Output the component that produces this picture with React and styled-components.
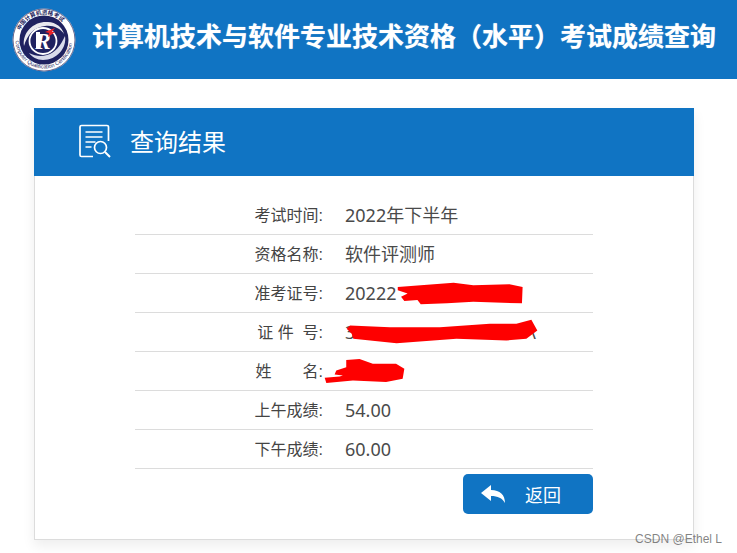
import React from "react";
import styled, { createGlobalStyle } from "styled-components";

const BLUE = "#1074c3";

const GlobalStyle = createGlobalStyle`
  html, body {
    margin: 0;
    padding: 0;
    background: #fff;
    font-family: "Liberation Sans", "Noto Sans CJK SC", sans-serif;
  }
`;

const Page = styled.div`
  position: relative;
  width: 737px;
  height: 553px;
  overflow: hidden;
`;

const TopBar = styled.header`
  height: 79px;
  background: ${BLUE};
  display: flex;
  align-items: center;
  padding-left: 12px;
  box-sizing: border-box;
`;

const SiteTitle = styled.h1`
  margin: -6px 0 0 16px;
  font-size: 26px;
  line-height: 36px;
  font-weight: 700;
  color: #fff;
  white-space: nowrap;
  text-shadow: 0 0 1px rgba(255, 255, 255, 0.6);
`;

const Card = styled.section`
  width: 660px;
  height: 432px;
  margin: 29px 0 0 34px;
  box-sizing: border-box;
  border: 1px solid #dcdcdc;
  border-top: 0;
  box-shadow: 0 6px 12px rgba(0, 0, 0, 0.07);
  display: flex;
  flex-direction: column;
  align-items: center;
`;

const CardHead = styled.div`
  align-self: stretch;
  margin: 0 -1px;
  height: 68px;
  background: ${BLUE};
  display: flex;
  align-items: center;
  padding-left: 45px;
  gap: 19px;
  color: #fff;
`;

const CardTitle = styled.h2`
  margin: 2px 0 0;
  font-size: 24px;
  font-weight: 400;
  line-height: 32px;
`;

const Rows = styled.div`
  width: 458px;
  margin-top: 20px;
`;

const Row = styled.div`
  position: relative;
  height: 39px;
  box-sizing: border-box;
  border-bottom: 1px solid #dcdcdc;
  display: flex;
  align-items: center;
  color: #444;
`;

const Label = styled.span`
  width: 188px;
  padding-bottom: 2px;
  text-align: right;
  font-size: 16px;
  white-space: pre;
  color: #444;
`;

const Value = styled.span`
  margin-left: 22px;
  font-family: "Noto Sans", "Noto Sans CJK SC", sans-serif;
  font-size: 18px;
  line-height: 24px;
  white-space: pre;
  color: #4a4a4a;
`;

const Hidden = styled.span`
  display: inline-block;
  width: ${(p) => p.$w}px;
`;

const Scribble = styled.svg`
  position: absolute;
  left: ${(p) => p.$x}px;
  top: ${(p) => p.$y}px;
  fill: #fe0000;
`;

const BackRow = styled.div`
  width: 458px;
  margin-top: 5px;
  display: flex;
  justify-content: flex-end;
`;

const BackButton = styled.button`
  width: 130px;
  height: 40px;
  border: 0;
  border-radius: 5px;
  background: ${BLUE};
  color: #fff;
  font: inherit;
  font-size: 18px;
  display: flex;
  align-items: center;
  padding: 0 0 0 18px;
  gap: 20px;
`;

const Watermark = styled.span`
  position: absolute;
  right: 15px;
  bottom: 7px;
  font-size: 12px;
  line-height: 14px;
  color: rgba(90, 90, 90, 0.75);
`;

const Logo = () => (
  <svg width="64" height="64" viewBox="0 0 64 64">
    <defs>
      <path id="ringTop" d="M6.500 32a25.500 25.500 0 0 1 51 0" />
      <path id="ringBottom" d="M3.500 32a28.500 28.500 0 0 0 57 0" />
    </defs>
    <circle cx="32" cy="32" r="31.500" fill="#fff" />
    <circle cx="32" cy="32" r="31" fill="none" stroke="#23245c" strokeWidth="0.700" />
    <circle cx="32" cy="32" r="24.500" fill="#1f2260" />
    <path d="M12 38C10 24 22 13 36 14c8 .5 14 5 16 12-4-6-11-9-19-8-11 1-18 9-21 20z" fill="#fff" opacity="0.9" />
    <path d="M53 28c2 12-8 24-22 24-6 0-11-3-14-7 6 3 12 4 18 2 8-2 14-10 18-19z" fill="#d9dbea" />
    <ellipse cx="31" cy="33" rx="13.500" ry="13" fill="#1f2260" stroke="#fff" strokeWidth="1.800" />
    <text x="31" y="41" textAnchor="middle" fontSize="23" fontStyle="italic" fontWeight="700" fill="#fff" fontFamily="Liberation Serif, serif">R</text>
    <path d="M24 24h4v16h-4z" fill="#fff" />
    <path d="M33 24l10-4-3 4h3l-7 5 1-4z" fill="#e8232a" />
    <text fontSize="5.600" fontWeight="700" fill="#23245c" fontFamily="Noto Sans CJK SC, sans-serif">
      <textPath href="#ringTop" startOffset="12%">中国计算机资格考试</textPath>
    </text>
    <text fontSize="5.400" fill="#23245c" fontFamily="Liberation Sans, sans-serif">
      <textPath href="#ringBottom" startOffset="1%">Computer Qualification Certification</textPath>
    </text>
  </svg>
);

const ResultIcon = () => (
  <svg width="32" height="36" viewBox="0 0 32 36" fill="none" stroke="#fff" strokeWidth="1.700">
    <path d="M14 32.500H2.500a1.500 1.500 0 0 1-1.500-1.500V3a1.500 1.500 0 0 1 1.500-1.500H28a1.500 1.500 0 0 1 1.500 1.500v14" />
    <path d="M6.500 8h17M6.500 13h17M6.500 18h10M6.500 23h6" strokeWidth="1.500" />
    <circle cx="21.500" cy="23.500" r="6" />
    <path d="M26 28l5 5" strokeWidth="2" />
  </svg>
);

const BackIcon = () => (
  <svg width="24" height="18" viewBox="0 0 24 18" fill="#fff">
    <path d="M0 8L10 0v5c9 0 14 5 14 13-3-5-7-7-14-7v5z" />
  </svg>
);

const rows = [
  { label: "考试时间:", value: "2022年下半年" },
  { label: "资格名称:", value: "软件评测师" },
  {
    label: "准考证号:",
    value: "20222",
    mark: {
      x: 262, y: 8, w: 128, h: 23, box: "470 35 385 70",
      d: "M470 50L540 45 640 37 700 45 810 42 850 50 848 100 700 95 620 100 540 103 530 90 490 93 480 80 500 70 470 60z",
    },
  },
  {
    label: "证 件  号:",
    value: "3",
    hidden: 174,
    tail: "\\",
    mark: {
      x: 211, y: 6, w: 192, h: 25, box: "318 146 577 74",
      d: "M330 165L450 170 600 170 750 160 830 160 875 148 893 180 860 205 800 210 650 205 470 218 340 205 335 190 320 175z",
    },
  },
  {
    label: "姓       名:",
    value: "",
    mark: {
      x: 189, y: 6, w: 81, h: 26, box: "253 263 244 77",
      d: "M320 268L360 265 400 280 470 280 495 295 490 325 440 335 340 330 260 338 255 322 300 318 310 315 285 312 290 300 320 290z",
    },
  },
  { label: "上午成绩:", value: "54.00" },
  { label: "下午成绩:", value: "60.00" },
];

export default function App() {
  return (
    <>
      <GlobalStyle />
      <Page>
        <TopBar>
          <Logo />
          <SiteTitle>计算机技术与软件专业技术资格（水平）考试成绩查询</SiteTitle>
        </TopBar>
        <Card>
          <CardHead>
            <ResultIcon />
            <CardTitle>查询结果</CardTitle>
          </CardHead>
          <Rows>
            {rows.map((r) => (
              <Row key={r.label}>
                <Label>{r.label}</Label>
                <Value>
                  {r.value}
                  {r.hidden && <Hidden $w={r.hidden} />}
                  {r.tail}
                </Value>
                {r.mark && (
                  <Scribble $x={r.mark.x} $y={r.mark.y} width={r.mark.w} height={r.mark.h} viewBox={r.mark.box}>
                    <path d={r.mark.d} />
                  </Scribble>
                )}
              </Row>
            ))}
          </Rows>
          <BackRow>
            <BackButton>
              <BackIcon />
              返回
            </BackButton>
          </BackRow>
        </Card>
        <Watermark>CSDN @Ethel L</Watermark>
      </Page>
    </>
  );
}
